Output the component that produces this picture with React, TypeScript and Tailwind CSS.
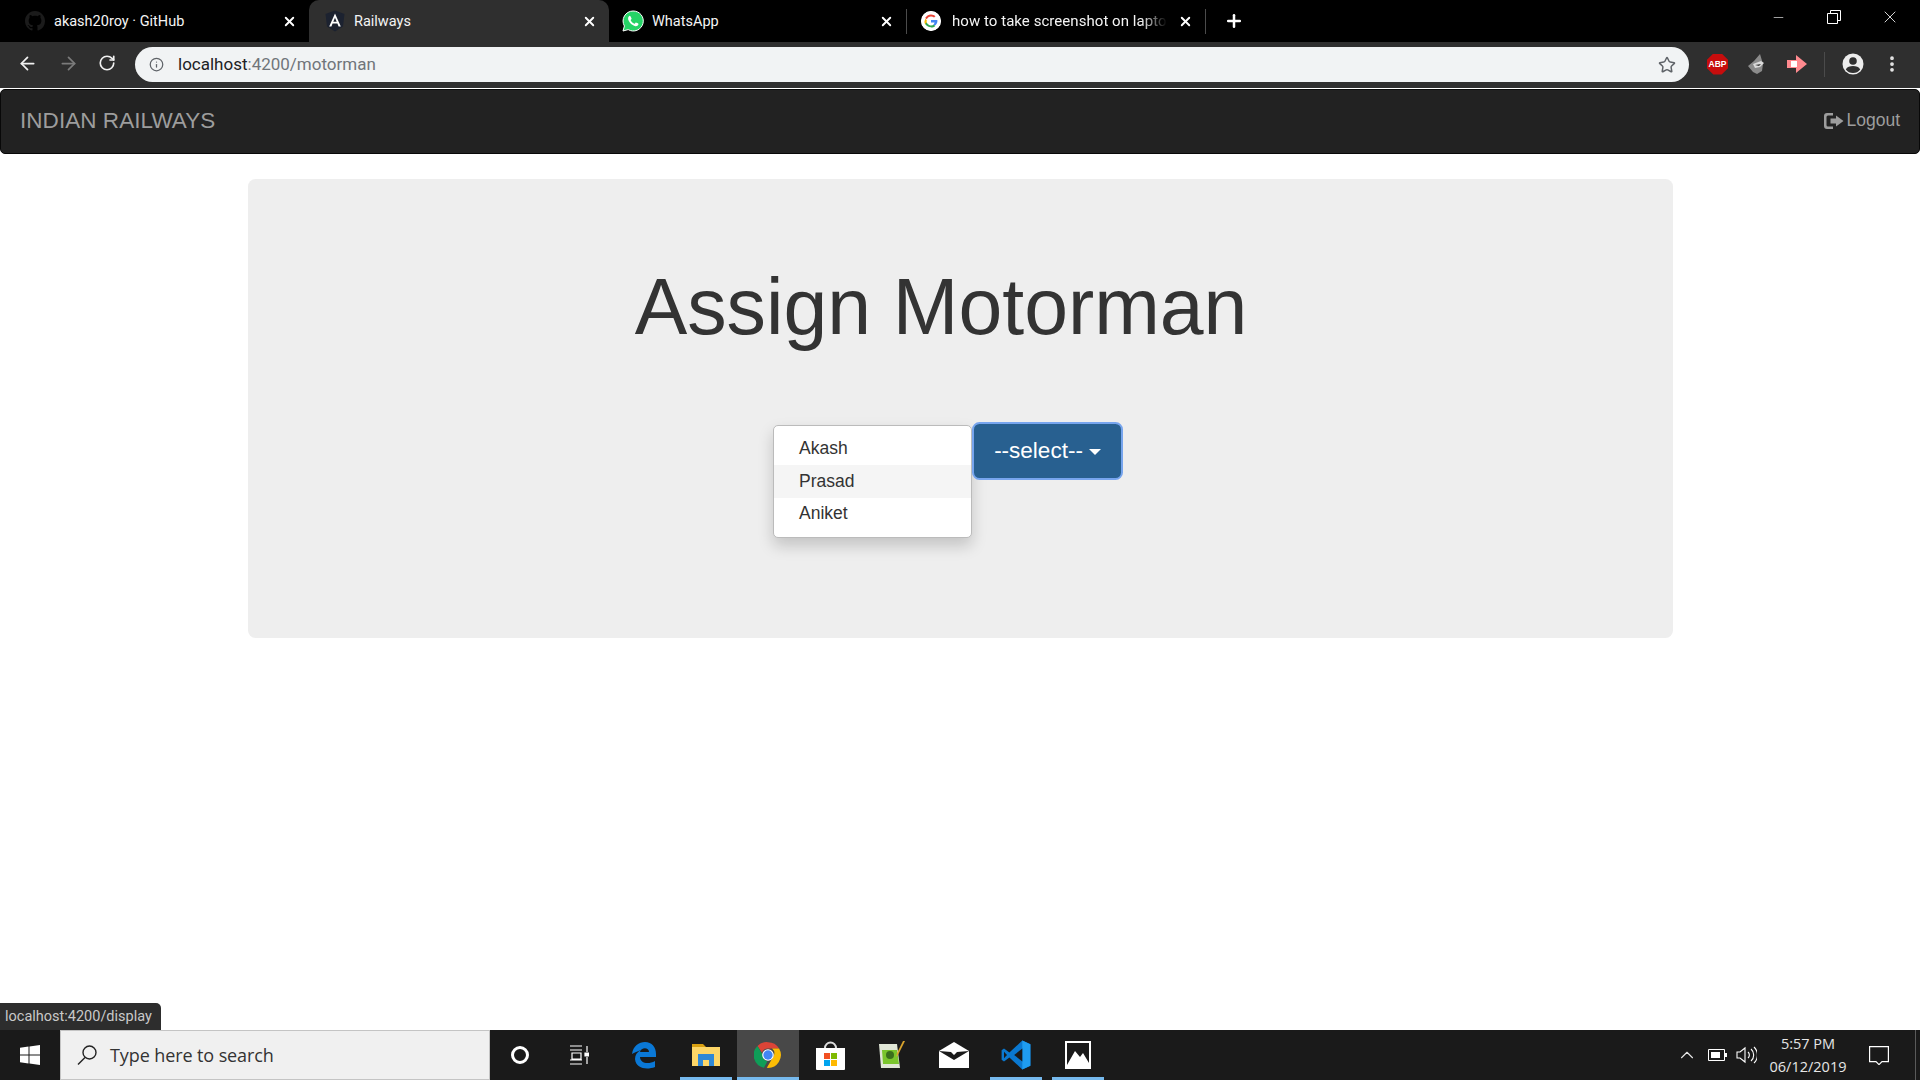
import React from 'react'
import { ArrowLeft, ArrowRight, RotateCw, Info, Star, X, Plus, Minus, ChevronUp, MoreVertical } from 'lucide-react'

const chrome = { fontFamily: 'Roboto, "Noto Sans", sans-serif' }
const segoe = { fontFamily: '"Open Sans", "Noto Sans", sans-serif' }
const helvetica = { fontFamily: '"Liberation Sans", Arial, sans-serif' }

function GithubIcon() {
  return (
    <svg width="20" height="20" viewBox="0 0 16 16" fill="#1b1b1b">
      <path d="M8 0C3.58 0 0 3.58 0 8c0 3.54 2.29 6.53 5.47 7.59.4.07.55-.17.55-.38 0-.19-.01-.82-.01-1.49-2.01.37-2.53-.49-2.69-.94-.09-.23-.48-.94-.82-1.13-.28-.15-.68-.52-.01-.53.63-.01 1.08.58 1.23.82.72 1.21 1.87.87 2.33.66.07-.52.28-.87.51-1.07-1.78-.2-3.64-.89-3.64-3.95 0-.87.31-1.59.82-2.15-.08-.2-.36-1.02.08-2.12 0 0 .67-.21 2.2.82.64-.18 1.32-.27 2-.27s1.36.09 2 .27c1.53-1.04 2.2-.82 2.2-.82.44 1.1.16 1.92.08 2.12.51.56.82 1.27.82 2.15 0 3.07-1.87 3.75-3.65 3.95.29.25.54.73.54 1.48 0 1.07-.01 1.93-.01 2.2 0 .21.15.46.55.38A8.01 8.01 0 0 0 16 8c0-4.42-3.58-8-8-8z" />
    </svg>
  )
}

function AngularIcon() {
  return (
    <svg width="20" height="22" viewBox="0 0 20 22">
      <path d="M10 0.5 19.5 4l-1.5 12.5L10 21.5 2 16.5.5 4z" fill="#1c2230" />
      <path d="M10 3.5 4.2 16.5h2.2l1.2-3h4.8l1.2 3h2.2zM9.99 7.7l1.7 4.1H8.3z" fill="#fff" />
    </svg>
  )
}

function WhatsAppIcon() {
  return (
    <svg width="22" height="22" viewBox="0 0 22 22">
      <path d="M11 1a10 10 0 0 0-8.6 15L1 21l5.2-1.4A10 10 0 1 0 11 1z" fill="#25d366" stroke="#fff" strokeWidth="1" />
      <path d="M7.8 5.8c-.5 0-1.700 1-1.700 2.800 0 3 3.700 7 7.400 7.600 1.700.2 3-1 3-2.200 0-.4-2.300-1.600-2.700-1.500-.4.1-.8 1.200-1.200 1.200-1 0-3.600-2.300-3.900-3.500 0-.4.9-.9.900-1.400 0-.4-1-2.800-1.800-3z" fill="#fff" />
    </svg>
  )
}

function GoogleIcon() {
  return (
    <svg width="20" height="20" viewBox="0 0 48 48" className="rounded-full bg-white">
      <circle cx="24" cy="24" r="24" fill="#fff" />
      <path fill="#EA4335" d="M24 13c2.900 0 5.300 1 7.300 2.800l3.400-3.400C32.200 10 28.500 8.300 24 8.300c-6.100 0-11.400 3.500-14 8.600l4 3.100C15.500 16 19.400 13 24 13z" />
      <path fill="#4285F4" d="M39.400 24.500c0-1.100-.1-2.100-.3-3.200H24v6.100h8.600c-.4 2-1.500 3.600-3.200 4.800l3.900 3c2.300-2.100 6.100-6 6.100-10.700z" />
      <path fill="#FBBC05" d="M14 27.900a9.500 9.500 0 0 1 0-6l-4-3.100a16 16 0 0 0 0 14.300z" />
      <path fill="#34A853" d="M24 39.700c4.300 0 7.800-1.400 10.300-3.800l-3.900-3c-1.500 1-3.500 1.600-6.400 1.600-4.600 0-8.500-3-10-7l-4 3.100c2.600 5.100 7.900 8.600 14 8.600z" />
    </svg>
  )
}

function Tab({ icon, label, active, className, fade }: { icon: React.ReactNode; label: string; active?: boolean; className: string; fade?: boolean }) {
  return (
    <div className={`${className} h-[42px] flex items-center pr-[12px] shrink-0 ${active ? 'bg-[#2f2f2f] rounded-t-[10px]' : ''}`}>
      <div className="w-[22px] flex justify-center shrink-0">{icon}</div>
      <span className={`flex-1 pt-px whitespace-nowrap overflow-hidden text-[#f4f4f4] ${fade ? 'ml-[10px] mr-[11px] text-[15px] tracking-[0.05px] [mask-image:linear-gradient(to_right,black_88%,transparent)]' : 'ml-[8px] text-[14.5px]'}`}>{label}</span>
      <X size={15} strokeWidth={3} className="text-white shrink-0" />
    </div>
  )
}

function TabStrip() {
  return (
    <div className="h-[42px] bg-black flex shrink-0" style={chrome}>
      <Tab className="w-[309px] pl-[24px]" label="akash20roy · GitHub" icon={<GithubIcon />} />
      <Tab className="w-[300px] pl-[15px]" active label="Railways" icon={<AngularIcon />} />
      <Tab className="w-[297px] pl-[13px]" label="WhatsApp" icon={<WhatsAppIcon />} />
      <div className="w-px h-[25px] mt-[9px] bg-[#4b4b4b]" />
      <Tab className="w-[298px] pl-[13px]" label="how to take screenshot on laptop" icon={<GoogleIcon />} fade />
      <div className="w-px h-[25px] mt-[9px] bg-[#4b4b4b]" />
      <div className="w-[56px] flex items-center justify-center">
        <Plus size={20} strokeWidth={3} className="text-white" />
      </div>
      <div className="ml-auto flex h-[34px] items-center">
        <div className="w-[56px] flex justify-center"><Minus size={15} strokeWidth={1} className="text-white" /></div>
        <div className="w-[56px] flex justify-center">
          <svg width="14" height="14" viewBox="0 0 14 14" fill="none" stroke="#fff"><path d="M.5 3.500h10v10H.5zM3.500 3.500V.5h10v10h-3" /></svg>
        </div>
        <div className="w-[56px] mr-[2px] flex justify-center"><X size={20} strokeWidth={1} className="text-white" /></div>
      </div>
    </div>
  )
}

function AvatarIcon() {
  return (
    <svg width="22" height="22" viewBox="0 0 22 22" className="ml-[17px]">
      <circle cx="11" cy="11" r="10.500" fill="#ececec" />
      <circle cx="11" cy="8" r="3.800" fill="#2f2f2f" />
      <path d="M3.800 16.500C5 13.800 8 13 11 13s6 .8 7.200 3.500A9 9 0 0 1 11 20a9 9 0 0 1-7.200-3.500z" fill="#2f2f2f" />
    </svg>
  )
}

function Toolbar() {
  return (
    <div className="h-[46px] bg-[#2f2f2f] flex items-start shrink-0" style={chrome}>
      <div className="flex items-center h-[42px] w-[135px] pl-[17px] shrink-0">
        <ArrowLeft size={21} strokeWidth={2} className="text-[#f1f1f1]" />
        <ArrowRight size={21} strokeWidth={2} className="text-[#7b7b7b] ml-[20px]" />
        <RotateCw size={18} strokeWidth={2.200} className="text-[#f1f1f1] ml-[19px]" />
      </div>
      <div className="mt-[5px] h-[35px] w-[1554px] shrink-0 rounded-full bg-[#f1f3f4] flex items-center pl-[14px] pr-[13px]">
        <Info size={15} strokeWidth={2} className="text-[#5f6368]" />
        <span className="ml-[14px] pt-px text-[17px] text-[#202124]">localhost<span className="text-[#70757a]">:4200/motorman</span></span>
        <Star size={18} strokeWidth={2} className="ml-auto text-[#5f6368]" />
      </div>
      <div className="flex items-center h-[46px] pb-[2px] pl-[18px]">
        <div className="w-[21px] h-[21px] bg-[#c70d0d] [clip-path:polygon(30%_0,70%_0,100%_30%,100%_70%,70%_100%,30%_100%,0_70%,0_30%)] flex items-center justify-center text-[8.5px] font-bold text-white" style={helvetica}>ABP</div>
        <svg width="20" height="22" viewBox="0 0 20 22" className="ml-[19px]">
          <path d="M13 1 7 8 1 13l5 6 4 2 5-3 1-7z" fill="#8b8b8b" />
          <path d="M6 11l8-3 3 2-4 4-5 1z" fill="#dcdcdc" />
          <path d="M8 12l6-1-2 2z" fill="#333" />
        </svg>
        <svg width="20" height="20" viewBox="0 0 20 20" className="ml-[20px]">
          <path d="M0 6h9V1l11 9-11 9v-5H0z" fill="#ff8a8f" />
          <path d="M4 7h6v6H4z" fill="#fff" />
        </svg>
        <div className="w-px h-[25px] bg-[#4b4b4b] ml-[17px]" />
        <AvatarIcon />
        <MoreVertical size={20} strokeWidth={2.500} className="text-[#e8e8e8] ml-[18px]" />
      </div>
    </div>
  )
}

function Navbar() {
  return (
    <div className="h-[65px] mt-px pb-[2px] bg-[#222] border border-[#080808] rounded-[5px] flex items-center justify-between pl-[19px] pr-[19px] shrink-0 text-[#9d9d9d]" style={helvetica}>
      <span className="text-[22.5px] tracking-[0.05px]">INDIAN RAILWAYS</span>
      <span className="flex items-center text-[17.5px]">
        <svg width="20" height="18" viewBox="0 0 20 18" className="mr-[2px] ml-[2px]" fill="#9d9d9d">
          <path d="M3 1h6v2.500H4a1.500 1.500 0 0 0-1.500 1.500v8A1.500 1.500 0 0 0 4 14.500h5V17H3a3 3 0 0 1-3-3V4a3 3 0 0 1 3-3z" />
          <path d="M12 3.500 19.500 9 12 14.500V11.500H6.500v-5H12z" />
        </svg>
        Logout
      </span>
    </div>
  )
}

function Jumbotron() {
  return (
    <div className="mx-auto mt-[25px] w-[1425px] h-[459px] bg-[#eee] rounded-[7.500px] flex flex-col items-center text-[#333]" style={helvetica}>
      <h1 className="mt-[85px] pr-[38px] text-[78.750px] leading-[86px] whitespace-nowrap">Assign Motorman</h1>
      <div className="mt-[72px] pr-[24px] flex items-start">
        <div className="w-[199px] h-[113px] mt-[3px] bg-white border border-[#bbb] rounded-[5px] py-[6px] shadow-[0_7.500px_15px_rgba(0,0,0,0.175)] text-[17.500px]">
          <div className="h-[33px] pl-[25px] flex items-center">Akash</div>
          <div className="h-[33px] pl-[25px] flex items-center bg-[#f5f5f5]">Prasad</div>
          <div className="h-[31px] pl-[25px] flex items-center">Aniket</div>
        </div>
        <div className="w-[151px] h-[58px] bg-[#286090] border-2 border-[#77a5ee] rounded-[7.500px] flex items-center justify-center text-white text-[22.500px]">
          <span>--select--</span>
          <span className="ml-[6px] mt-[2px] w-0 h-0 border-x-[6px] border-x-transparent border-t-[6px] border-t-white" />
        </div>
      </div>
    </div>
  )
}

function WindowsLogo() {
  return (
    <svg width="20" height="20" viewBox="0 0 20 20" fill="#fff">
      <path d="M0 2.800 8.500 1.600v8H0zM9.500 1.500 20 0v9.600H9.500zM0 10.500h8.500v8L0 17.300zM9.500 10.500H20V20L9.500 18.600z" />
    </svg>
  )
}

function TaskCell({ children, underline, active }: { children?: React.ReactNode; underline?: boolean; active?: boolean }) {
  return (
    <div className={`relative w-[62px] h-full flex items-center justify-center shrink-0 ${active ? 'bg-[#484848]' : ''}`}>
      {children}
      {(underline || active) && <div className={`absolute bottom-0 h-[3px] bg-[#76b9ed] ${active ? 'inset-x-0' : 'inset-x-[5px]'}`} />}
    </div>
  )
}

function Taskbar() {
  return (
    <div className="h-[50px] bg-[#1a1a1a] flex items-center shrink-0" style={segoe}>
      <div className="w-[60px] flex justify-center"><WindowsLogo /></div>
      <div className="w-[430px] -mr-px h-full bg-[#f0f0f0] border border-[#c4c4c4] flex items-center pl-[15px] shrink-0">
        <svg width="22" height="22" viewBox="0 0 22 22" fill="none" stroke="#222" strokeWidth="1.400"><circle cx="13.500" cy="8.500" r="6.500" /><path d="M9 13.500 2 20.500" /></svg>
        <span className="ml-[12px] text-[18px] tracking-[-0.1px] text-[#333]">Type here to search</span>
      </div>
      <TaskCell><div className="w-[18px] h-[18px] rounded-full border-[3px] border-white" /></TaskCell>
      <div className="-ml-[3px] mr-[3px]">
        <svg width="20" height="20" viewBox="0 0 20 20" fill="none" stroke="#fff" strokeWidth="1.200" className="mx-[21px]">
          <path d="M1 1h12M1 5h12M3 8h9v6H3zM1 19h12M1 15h12M18 1v6M18 12v7" />
          <path d="M16 8h4v3h-4z" fill="#fff" />
        </svg>
      </div>
      <TaskCell>
        <svg width="26" height="28" viewBox="0 0 26 28">
          <path d="M1 13C2 5 8 1 14 1c7 0 11 5 11 12v3H9c0 6 8 8 15 4v6c-8 3-19 2-20-8 0-4 2-7 6-9-3 1-7 3-9 4zM9 11h9c0-5-8-5-9 0z" fill="#0a78d6" />
        </svg>
      </TaskCell>
      <TaskCell underline>
        <svg width="28" height="24" viewBox="0 0 28 24">
          <path d="M0 1h11l3 3h-14z" fill="#d9a010" />
          <path d="M0 4h28v19H0z" fill="#fdd667" />
          <path d="M6 11h16v12h-5v-6h-6v6H6z" fill="#2f88d6" />
        </svg>
      </TaskCell>
      <TaskCell active>
        <svg width="28" height="28" viewBox="0 0 48 48">
          <path d="M24 2a22 22 0 0 1 19 11H24a11 11 0 0 0-10.400 7.300L6 8.500A22 22 0 0 1 24 2z" fill="#db4437" />
          <path d="M6 8.500 15 24a11 11 0 0 0 8 10.800L17 45.800A22 22 0 0 1 6 8.500z" fill="#0f9d58" />
          <path d="M43 13a22 22 0 0 1-21 33l11-19a11 11 0 0 0-2-14z" fill="#fbbc05" />
          <circle cx="24" cy="24" r="10" fill="#fff" />
          <circle cx="24" cy="24" r="8" fill="#4285f4" />
        </svg>
      </TaskCell>
      <TaskCell>
        <svg width="29" height="30" viewBox="0 0 29 30">
          <path d="M9 8a5.500 5.500 0 0 1 11 0" fill="none" stroke="#ddd" strokeWidth="2" />
          <path d="M0 8h29v21a1 1 0 0 1-1 1H1a1 1 0 0 1-1-1z" fill="#fff" />
          <path d="M8 13h6v6H8z" fill="#f25022" />
          <path d="M15 13h6v6h-6z" fill="#7fba00" />
          <path d="M8 20h6v6H8z" fill="#00a4ef" />
          <path d="M15 20h6v6h-6z" fill="#ffb900" />
        </svg>
      </TaskCell>
      <TaskCell>
        <svg width="28" height="30" viewBox="0 0 28 30">
          <path d="M1 4h18l3 24H3z" fill="#e0e6d6" />
          <path d="M4 10h15l2 14H5z" fill="#7ac52c" />
          <circle cx="12" cy="15" r="4" fill="#3b6f1d" />
          <path d="M27 1 20 15l-2 2 1-4 6-12z" fill="#d8a32c" />
        </svg>
      </TaskCell>
      <TaskCell>
        <svg width="30" height="26" viewBox="0 0 30 26">
          <path d="M0 9 15 0l15 9v17H0z" fill="#fff" />
          <path d="M0 9l15 9 15-9-12 1-3 3-3-3z" fill="#1a1a1a" />
        </svg>
      </TaskCell>
      <TaskCell underline>
        <svg width="30" height="32" viewBox="0 0 100 100">
          <path d="M71 98 28 58 10 72 2 66V34l8-6 18 14L71 2l27 12v72z" fill="#0a78d0" />
          <path d="M71 2l27 12v72L71 98z" fill="#1f9cf0" />
          <path d="M71 28 44 50l27 22z" fill="#1a1a1a" />
          <path d="M10 39 20 50 10 61z" fill="#1a1a1a" />
        </svg>
      </TaskCell>
      <TaskCell underline>
        <svg width="26" height="28" viewBox="0 0 26 28">
          <path d="M0 0h26v28H0z" fill="#fff" />
          <path d="M2 2h22v22H2z" fill="#1a1a1a" />
          <path d="M2 24 10 10l5 6 3-4 6 10v2z" fill="#fff" />
        </svg>
      </TaskCell>
      <div className="ml-auto flex items-center text-[#e6e6e6] h-full">
        <ChevronUp size={22} strokeWidth={1.200} />
        <svg width="19" height="12" viewBox="0 0 19 12" className="ml-[10px]" fill="none" stroke="#fff"><path d="M.5.500h16v11H.5z" /><path d="M3 3h9v6H3z" fill="#fff" stroke="none" /><path d="M17 4h2v4h-2z" fill="#fff" stroke="none" /></svg>
        <svg width="21" height="18" viewBox="0 0 21 18" className="ml-[9px]" fill="none" stroke="#fff" strokeWidth="1.100"><path d="M1 6h3l5-4v14l-5-4H1zM12 6a4 4 0 0 1 0 6M15 3a8 8 0 0 1 0 12M18 1a11 11 0 0 1 0 16" /></svg>
        <div className="w-[90px] ml-[6px] flex flex-col items-center text-[14.500px] leading-[23px]">
          <span>5:57 PM</span>
          <span>06/12/2019</span>
        </div>
        <svg width="20" height="19" viewBox="0 0 20 19" className="ml-[16px]" fill="none" stroke="#fff" strokeWidth="1.200"><path d="M.6.600h18.800v15H13l-3 3-3-3H.6z" /></svg>
        <div className="w-px h-full bg-[#5a5a5a] ml-[26px] mr-[4px]" />
      </div>
    </div>
  )
}

export default function App() {
  return (
    <div className="relative h-screen flex flex-col bg-white overflow-hidden">
      <TabStrip />
      <Toolbar />
      <Navbar />
      <main className="flex-1">
        <Jumbotron />
      </main>
      <div className="absolute left-0 bottom-[50px] w-[161px] h-[27px] pt-[1px] bg-[#2d2d2d] rounded-tr-[5px] pl-[5px] flex items-center text-[14.500px] text-[#c9c9c9]" style={chrome}>localhost:4200/display</div>
      <Taskbar />
    </div>
  )
}
